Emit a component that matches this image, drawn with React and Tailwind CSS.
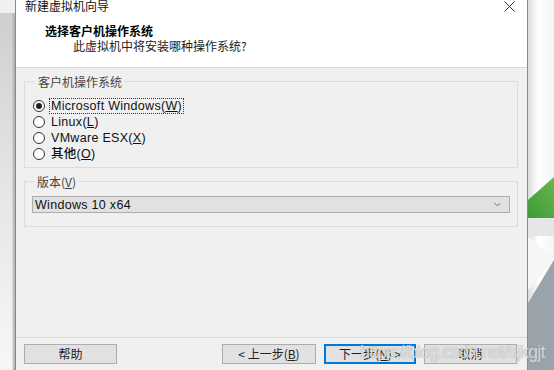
import { ChevronDown } from 'lucide-react'

const cn = '"Noto Sans CJK SC", "Liberation Sans", sans-serif'
const lat = '"Liberation Sans", "Noto Sans CJK SC", sans-serif'

const options = [
  { label: 'Microsoft Windows', key: 'W', checked: true },
  { label: 'Linux', key: 'L' },
  { label: 'VMware ESX', key: 'X' },
  { label: '其他', key: 'O' },
]

function Radio({ checked }) {
  return (
    <span className="w-[12px] h-[12px] rounded-full border border-[#333] bg-white flex items-center justify-center shrink-0">
      {checked && <span className="w-[6px] h-[6px] rounded-full bg-[#222]" />}
    </span>
  )
}

function Btn({ children, focus, className = '' }) {
  return (
    <div
      className={
        'h-[20px] flex items-center justify-center text-[12px] text-[#222] bg-[#e1e1e1] ' +
        (focus ? 'border border-[#0078d7] shadow-[inset_0_0_0_1px_#0078d7] ' : 'border border-[#adadad] ') +
        className
      }
      style={{ fontFamily: cn }}
    >
      {children}
    </div>
  )
}

export default function App() {
  return (
    <div className="w-[554px] h-[370px] flex overflow-hidden relative bg-white">
      {/* left backdrop */}
      <div className="w-[15px] flex flex-col">
        <div className="h-[13px] bg-[#f0f0f0]" />
        <div className="flex-1 bg-gradient-to-b from-[#cfcfcf] via-[#e6e6e6] to-[#f7f7f7] shadow-[inset_-3px_0_2px_-1px_#b0b0b0]" />
      </div>

      {/* dialog */}
      <div className="w-[513px] flex flex-col border-l border-r border-[#8a8a8a] bg-[#f0f0f0]">
        <div className="h-[68px] bg-white border-b border-[#d8d8d8] flex flex-col relative">
          <div className="flex items-start justify-between pl-[9px] pr-[12px] h-[14px]">
            <span className="text-[12px] leading-[12px] text-[#111]" style={{ fontFamily: cn }}>新建虚拟机向导</span>
            <svg width="11" height="11" viewBox="0 0 11 11" className="mt-[1px]">
              <path d="M0.5 0.5 L10.5 10.5 M10.5 0.5 L0.5 10.5" stroke="#333" strokeWidth="1" />
            </svg>
          </div>
          <div className="pl-[29px] pt-[10px] text-[12px] leading-[14px] font-bold text-black" style={{ fontFamily: cn }}>
            选择客户机操作系统
          </div>
          <div className="pl-[57px] pt-[1px] text-[12px] leading-[14px] text-[#222]" style={{ fontFamily: cn }}>
            此虚拟机中将安装哪种操作系统?
          </div>
        </div>

        <div className="flex-1 flex flex-col pl-[8px] pr-[9px]">
          <fieldset className="mt-[7px] border border-[#dcdcdc] h-[93px] pl-[8px] m-0">
            <legend className="ml-[2px] px-[3px] text-[12px] leading-[13px] text-[#444]" style={{ fontFamily: cn }}>
              客户机操作系统
            </legend>
            <div className="flex flex-col pt-[10px]">
              {options.map((o) => (
                <div key={o.key} className="h-[16px] flex items-center gap-[4px]">
                  <Radio checked={o.checked} />
                  <span
                    className={
                      'text-[12.5px] leading-[14px] tracking-[0.3px] text-[#111] px-[1px] ' +
                      (o.checked ? 'border border-dotted border-[#333]' : 'border border-transparent')
                    }
                    style={{ fontFamily: lat, fontWeight: 500 }}
                  >
                    {o.label}(<span className="underline">{o.key}</span>)
                  </span>
                </div>
              ))}
            </div>
          </fieldset>

          <fieldset className="mt-[7px] border border-[#dcdcdc] h-[52px] pl-[7px] pr-[7px] m-0">
            <legend className="ml-[2px] px-[3px] text-[12px] leading-[13px] text-[#444]" style={{ fontFamily: cn }}>
              版本(<span className="underline">V</span>)
            </legend>
            <div className="mt-[8px] h-[17px] bg-[#e1e1e1] border border-[#adadad] flex items-center justify-between pl-[2px] pr-[6px]">
              <span className="text-[12.5px] leading-[14px] tracking-[0.3px] text-[#111]" style={{ fontFamily: lat, fontWeight: 500 }}>
                Windows 10 x64
              </span>
              <ChevronDown size={11} strokeWidth={1.6} color="#444" />
            </div>
          </fieldset>

          <div className="flex-1" />
        </div>

        <div className="h-[33px] border-t border-[#d8d8d8] flex items-start pt-[6px] pl-[8px] pr-[10px]">
          <Btn className="w-[93px]">帮助</Btn>
          <div className="flex-1" />
          <div className="flex gap-[8px]">
            <Btn className="w-[94px]">&lt; 上一步(<span className="underline">B</span>)</Btn>
            <Btn focus className="w-[92px]">下一步(<span className="underline">N</span>) &gt;</Btn>
            <Btn className="w-[93px]">取消</Btn>
          </div>
        </div>
      </div>

      {/* right backdrop */}
      <div className="flex-1">
        <svg width="26" height="370" viewBox="0 0 26 370" preserveAspectRatio="none">
          <defs>
            <linearGradient id="sh" x1="0" x2="1" y1="0" y2="0">
              <stop offset="0" stopColor="#dcdcdc" />
              <stop offset="0.4" stopColor="#ffffff" />
              <stop offset="1" stopColor="#f4f4f4" />
            </linearGradient>
            <linearGradient id="gr" x1="0" x2="1" y1="1" y2="0">
              <stop offset="0" stopColor="#3d9a3b" />
              <stop offset="1" stopColor="#6ab64a" />
            </linearGradient>
          </defs>
          <rect x="0" y="0" width="26" height="370" fill="url(#sh)" />
          <polygon points="0,200 26,177 26,218 0,218" fill="url(#gr)" />
          <polygon points="0,218 26,218 26,236 0,236" fill="#e4e6e8" />
          <polygon points="0,236 26,260 0,290" fill="#f6f6f6" />
          <polygon points="26,260 26,370 0,370 0,303" fill="#9aa2aa" />
        </svg>
      </div>

      {/* watermark */}
      <div
        className="absolute left-[360px] top-[342px] text-[18px] leading-[20px] tracking-[-0.8px] text-[rgba(240,240,240,0.8)] whitespace-nowrap"
        style={{ fontFamily: lat, textShadow: '0 0 1px rgba(110,110,110,0.7)' }}
      >
        https://blog.csdn.net/sjkgjt
      </div>
    </div>
  )
}
